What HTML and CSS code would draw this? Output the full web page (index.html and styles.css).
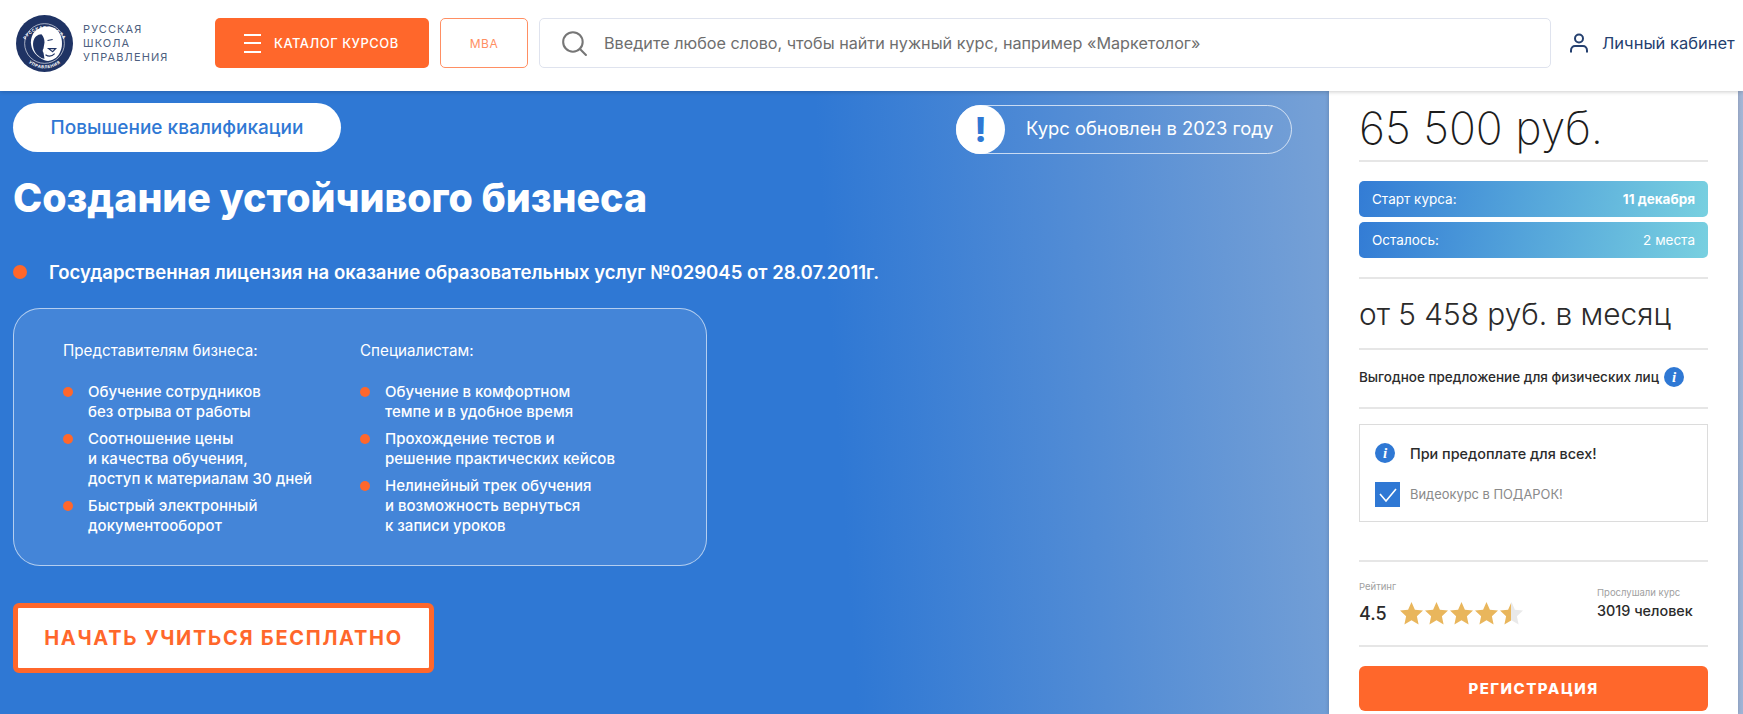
FILE: index.html
```html
<!DOCTYPE html>
<html lang="ru">
<head>
  <meta charset="UTF-8">
  <title>Создание устойчивого бизнеса</title>
  <link rel="stylesheet" href="styles.css">
</head>
<body>
  <header class="topbar">
    <a class="logo" href="#">
      <svg class="logo-mark" viewBox="0 0 56 56" width="57" height="57">
        <defs>
          <path id="logoTop" d="M6.500 32A21.800 21.800 0 0 1 49.500 32"/>
          <path id="logoBottom" d="M3.500 31A24.700 24.700 0 0 0 52.500 31"/>
        </defs>
        <circle cx="28" cy="28" r="28" fill="#1f3364"/>
        <circle cx="28" cy="28" r="19.500" fill="none" stroke="#fff" stroke-width=".6"/>
        <path d="M17 18c4-6 14-9 21-5 6 4 8 11 7 18-1 6-4 11-9 13-4 2-8 1-11-1-5-3-9-7-10-13-1-4 0-8 2-12z" fill="#fff"/>
        <path d="M25 19c-4 0-7 3-8 7-1 5 1 11 5 14 2 2 4 3 6 3l-1-6c-1-1-1-3 0-4l1-6c0-3-1-6-3-8z" fill="#1f3364"/>
        <path d="M32 33h7l-3 3zM29 39c3 2 6 2 9-1" fill="none" stroke="#1f3364" stroke-width="1.100"/>
        <path d="M31 25l5-1" stroke="#1f3364" stroke-width="1"/>
        <text class="logo-ring"><textPath href="#logoTop" startOffset="50%" text-anchor="middle">РУССКАЯ ШКОЛА</textPath></text>
        <text class="logo-ring"><textPath href="#logoBottom" startOffset="50%" text-anchor="middle">УПРАВЛЕНИЯ</textPath></text>
      </svg>
      <span class="logo-text">РУССКАЯ<br>ШКОЛА<br>УПРАВЛЕНИЯ</span>
    </a>
    <a class="catalog-btn" href="#">
      <span class="burger"><i></i><i></i><i></i></span>
      КАТАЛОГ КУРСОВ
    </a>
    <a class="mba-btn" href="#">MBA</a>
    <div class="search">
      <svg viewBox="0 0 24 24" width="26" height="26" fill="none" stroke="#767676" stroke-width="1.9">
        <circle cx="11" cy="11" r="9"/>
        <path d="M17.500 17.500L23 23" stroke-linecap="round"/>
      </svg>
      <span>Введите любое слово, чтобы найти нужный курс, например «Маркетолог»</span>
    </div>
    <a class="cabinet" href="#">
      <svg viewBox="0 0 18 20" width="18" height="20" fill="none" stroke="#25406f" stroke-width="2">
        <circle cx="9" cy="5.500" r="4"/>
        <path d="M1 19.500v-2c0-3 2-4.500 4-4.500h8c2 0 4 1.500 4 4.500v2"/>
      </svg>
      <span>Личный кабинет</span>
    </a>
  </header>

  <main class="hero">
    <section class="course">
      <div class="course-top">
        <a class="tag" href="#">Повышение квалификации</a>
        <div class="updated">
          <span class="updated-icon">!</span>
          <span class="updated-text">Курс обновлен в 2023 году</span>
        </div>
      </div>
      <h1>Создание устойчивого бизнеса</h1>
      <p class="license">Государственная лицензия на оказание образовательных услуг №029045 от 28.07.2011г.</p>

      <div class="audience">
        <div class="audience-col">
          <h3>Представителям бизнеса:</h3>
          <ul>
            <li>Обучение сотрудников<br>без отрыва от работы</li>
            <li>Соотношение цены<br>и качества обучения,<br>доступ к материалам 30 дней</li>
            <li>Быстрый электронный<br>документооборот</li>
          </ul>
        </div>
        <div class="audience-col">
          <h3>Специалистам:</h3>
          <ul>
            <li>Обучение в комфортном<br>темпе и в удобное время</li>
            <li>Прохождение тестов и<br>решение практических кейсов</li>
            <li>Нелинейный трек обучения<br>и возможность вернуться<br>к записи уроков</li>
          </ul>
        </div>
      </div>

      <a class="start-btn" href="#">НАЧАТЬ УЧИТЬСЯ БЕСПЛАТНО</a>
    </section>

    <aside class="sidebar">
      <div class="price">65 500 руб.</div>
      <div class="bars">
        <div class="bar"><span>Старт курса:</span><b>11 декабря</b></div>
        <div class="bar"><span>Осталось:</span><span>2 места</span></div>
      </div>
      <div class="monthly">от 5 458 руб. в месяц</div>
      <div class="offer">
        <span>Выгодное предложение для физических лиц</span>
        <i class="info">i</i>
      </div>
      <div class="prepay">
        <div class="prepay-row">
          <i class="info">i</i>
          <span class="prepay-title">При предоплате для всех!</span>
        </div>
        <div class="prepay-row gift">
          <span class="check">
            <svg viewBox="0 0 25 25" width="25" height="25" fill="none" stroke="#fff" stroke-width="1.600"><path d="M5 12l6 7L21 7"/></svg>
          </span>
          <span class="gift-text">Видеокурс в ПОДАРОК!</span>
        </div>
      </div>
      <div class="stats">
        <div class="rating">
          <div class="stat-label">Рейтинг</div>
          <div class="rating-row">
            <span class="rating-num">4.5</span>
            <svg class="stars" viewBox="0 0 123 23" width="123" height="23">
              <defs>
                <path id="star" d="M11.500 0l3.400 7.700 8.100.9-6.100 5.600 1.700 8.300-7.100-4.200-7.100 4.200 1.700-8.300L0 8.600l8.100-.9z"/>
                <linearGradient id="halfStar"><stop offset="50%" stop-color="#e9b65c"/><stop offset="50%" stop-color="#e9e9e9"/></linearGradient>
              </defs>
              <use href="#star" x="0" fill="#e9b65c"/>
              <use href="#star" x="25" fill="#e9b65c"/>
              <use href="#star" x="50" fill="#e9b65c"/>
              <use href="#star" x="75" fill="#e9b65c"/>
              <use href="#star" x="100" fill="url(#halfStar)"/>
            </svg>
          </div>
        </div>
        <div class="listeners">
          <div class="stat-label">Прослушали курс</div>
          <div class="listeners-num">3019 человек</div>
        </div>
      </div>
      <a class="register-btn" href="#">РЕГИСТРАЦИЯ</a>
    </aside>
  </main>
</body>
</html>
```

FILE: styles.css
```css
/* orange #ff672b, blue #2f78d4, navy #25406f */
html, body {
  height: 100%;
}
body {
  margin: 0;
  overflow: hidden;
  display: flex;
  flex-direction: column;
  font-family: "Inter", "Noto Sans", sans-serif;
  color: #2b2b2b;
}
a {
  text-decoration: none;
}

/* header */
.topbar {
  height: 91px;
  flex: none;
  display: flex;
  align-items: center;
  background: #fff;
  box-shadow: 0 1px 4px rgba(0,0,0,.2);
  position: relative;
  z-index: 2;
  box-sizing: border-box;
  padding: 0 0 5px 16px;
}
.logo {
  display: flex;
  align-items: center;
  width: 199px;
  flex: none;
}
.logo-mark {
  flex: none;
}
.logo-ring {
  font-size: 4.200px;
  font-weight: 700;
  fill: #fff;
  letter-spacing: .5px;
}
.logo-text {
  margin-left: 10px;
  font-size: 11px;
  line-height: 14px;
  letter-spacing: 1.100px;
  color: #4e5f80;
}
.catalog-btn {
  width: 214px;
  height: 50px;
  flex: none;
  display: flex;
  align-items: center;
  background: #ff672b;
  border-radius: 5px;
  color: #fff;
  font-size: 12.900px;
  font-weight: 500;
  letter-spacing: .55px;
}
.burger {
  width: 17px;
  margin: 0 13px 0 29px;
  display: flex;
  flex-direction: column;
  gap: 6.500px;
}
.burger i {
  height: 2px;
  background: #fff;
}
.mba-btn {
  width: 88px;
  height: 50px;
  flex: none;
  box-sizing: border-box;
  margin-left: 11px;
  display: flex;
  align-items: center;
  justify-content: center;
  border: 1px solid #ff8f63;
  border-radius: 5px;
  color: #ff8f63;
  font-size: 12px;
  letter-spacing: .5px;
}
.search {
  width: 1012px;
  height: 50px;
  flex: none;
  box-sizing: border-box;
  margin-left: 11px;
  display: flex;
  align-items: center;
  gap: 17px;
  padding-left: 21px;
  border: 1px solid #dfe3ee;
  border-radius: 5px;
  color: #6e6e6e;
  font-size: 16.200px;
}
.cabinet {
  margin-left: 19px;
  display: flex;
  align-items: center;
  gap: 14px;
  color: #25406f;
  font-size: 16.500px;
  white-space: nowrap;
}

/* hero */
.hero {
  flex: 1;
  min-height: 0;
  display: flex;
  justify-content: space-between;
  padding-right: 5px;
  background: linear-gradient(86deg, #2f78d4 0, #2f78d4 48%, #75a0d6 76%, #a4b6d6 100%);
}
.course {
  width: 1329px;
  box-sizing: border-box;
  padding: 12px 37px 0 13px;
}
.course-top {
  display: flex;
  justify-content: space-between;
  align-items: flex-start;
  height: 51px;
}
.tag {
  width: 328px;
  height: 49px;
  display: flex;
  align-items: center;
  justify-content: center;
  background: #fff;
  border-radius: 25px;
  color: #2f78d4;
  font-size: 19px;
  font-weight: 500;
}
.updated {
  width: 336px;
  height: 49px;
  margin-top: 2px;
  box-sizing: border-box;
  display: flex;
  align-items: center;
  gap: 21px;
  border: 1px solid rgba(255,255,255,.7);
  border-radius: 25px;
  color: #fff;
  font-size: 18.400px;
}
.updated-text {
  padding-bottom: 4px;
}
.updated-icon {
  width: 49px;
  height: 49px;
  margin-left: -1px;
  flex: none;
  display: flex;
  align-items: center;
  justify-content: center;
  background: #fff;
  border-radius: 50%;
  color: #2f78d4;
  font-size: 34px;
  font-weight: 800;
}
h1 {
  margin: 19px 0 0;
  color: #fff;
  font-size: 39.300px;
  line-height: 50px;
  font-weight: 800;
}
.license {
  margin: 37px 0 0;
  padding-left: 36px;
  position: relative;
  color: #fff;
  font-size: 18.550px;
  line-height: 24px;
  font-weight: 600;
  white-space: nowrap;
}
.license::before, .audience li::before {
  content: "";
  position: absolute;
  border-radius: 50%;
  background: #ff672b;
}
.license::before {
  left: 0;
  top: 5px;
  width: 14px;
  height: 14px;
}
.audience {
  width: 694px;
  height: 258px;
  margin-top: 24px;
  box-sizing: border-box;
  display: flex;
  padding: 32px 0 0 49px;
  border: 1px solid rgba(255,255,255,.6);
  border-radius: 27px;
  background: rgba(255,255,255,.1);
  color: #fff;
}
.audience-col {
  width: 297px;
}
.audience h3 {
  margin: 0;
  font-size: 15.200px;
  line-height: 20px;
  font-weight: 400;
}
.audience ul {
  list-style: none;
  margin: 21px 0 0;
  padding: 0;
}
.audience li {
  position: relative;
  padding-left: 25px;
  margin-bottom: 7px;
  font-size: 15px;
  line-height: 20px;
  font-weight: 500;
}
.audience li::before {
  left: 0;
  top: 5px;
  width: 10px;
  height: 10px;
}
.start-btn {
  width: 421px;
  height: 70px;
  margin-top: 37px;
  box-sizing: border-box;
  display: flex;
  align-items: center;
  justify-content: center;
  background: #fff;
  border: 5px solid #ff672b;
  border-radius: 6px;
  color: #ff672b;
  font-size: 20px;
  font-weight: 700;
  letter-spacing: 1.700px;
}

/* sidebar */
.sidebar {
  width: 409px;
  flex: none;
  box-sizing: border-box;
  padding: 0 30px;
  background: #fff;
  box-shadow: 0 0 4px rgba(0,0,0,.2);
}
.price {
  height: 71px;
  box-sizing: border-box;
  padding-top: 7px;
  border-bottom: 2px solid #e6e6e6;
  font-size: 44.500px;
  line-height: 60px;
  font-weight: 200;
  color: #1c1c1c;
}
.bars {
  padding: 19px 0;
  border-bottom: 2px solid #e6e6e6;
  display: flex;
  flex-direction: column;
  gap: 5px;
}
.bar {
  height: 36px;
  box-sizing: border-box;
  padding: 0 13px;
  display: flex;
  align-items: center;
  justify-content: space-between;
  border-radius: 5px;
  background: linear-gradient(100deg, #337cd5, #78d0e0);
  color: #fff;
  font-size: 13.500px;
}
.monthly {
  height: 71px;
  box-sizing: border-box;
  border-bottom: 2px solid #e6e6e6;
  font-size: 29.800px;
  line-height: 70px;
  font-weight: 300;
  color: #2b2b2b;
}
.offer {
  height: 59px;
  box-sizing: border-box;
  display: flex;
  align-items: center;
  gap: 5px;
  padding-bottom: 3px;
  border-bottom: 2px solid #e6e6e6;
  font-size: 13.500px;
  font-weight: 500;
}
.info {
  width: 20px;
  height: 20px;
  flex: none;
  display: flex;
  align-items: center;
  justify-content: center;
  border-radius: 50%;
  background: #2f78d4;
  color: #fff;
  font-family: "Liberation Serif", serif;
  font-size: 15px;
  font-weight: 700;
}
.prepay {
  height: 98px;
  margin: 15px 0 38px;
  box-sizing: border-box;
  padding: 18px 15px 0;
  border: 1px solid #dcdcdc;
}
.prepay-row {
  display: flex;
  align-items: center;
}
.prepay-title {
  margin-left: 15px;
  font-size: 14.400px;
  font-weight: 500;
}
.gift {
  margin-top: 19px;
}
.check {
  width: 25px;
  height: 25px;
  flex: none;
  background: #2f78d4;
}
.check svg {
  display: block;
}
.gift-text {
  margin-left: 10px;
  font-size: 12.900px;
  color: #8a8a8a;
}
.stats {
  height: 87px;
  box-sizing: border-box;
  display: flex;
  justify-content: space-between;
  padding: 18px 0 0;
  border-top: 2px solid #e6e6e6;
  border-bottom: 2px solid #e6e6e6;
}
.stat-label {
  font-size: 9.500px;
  line-height: 14px;
  color: #a0a0a0;
}
.rating-row {
  display: flex;
  align-items: center;
  gap: 13px;
  margin-top: 8px;
}
.rating-num {
  font-size: 18px;
  font-weight: 500;
}
.stars {
  display: block;
}
.listeners {
  width: 111px;
  padding-top: 6px;
}
.listeners-num {
  margin-top: 2px;
  font-size: 14.400px;
  font-weight: 500;
}
.register-btn {
  height: 45px;
  margin-top: 19px;
  display: flex;
  align-items: center;
  justify-content: center;
  background: #ff672b;
  border-radius: 6px;
  color: #fff;
  font-size: 15px;
  font-weight: 800;
  letter-spacing: 1.500px;
}
```
